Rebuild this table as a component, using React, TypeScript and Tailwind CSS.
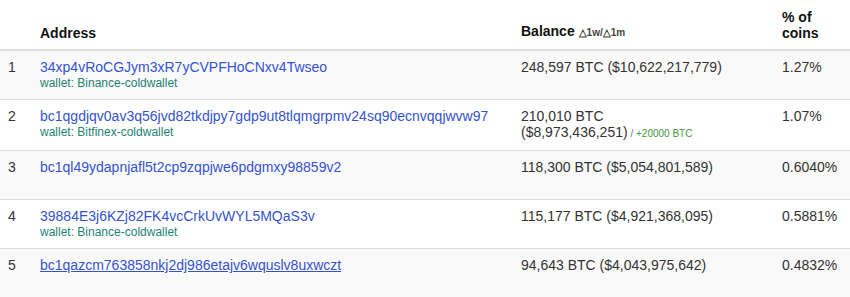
const rows = [
  {
    n: 1,
    addr: "34xp4vRoCGJym3xR7yCVPFHoCNxv4Twseo",
    wallet: "Binance-coldwallet",
    btc: "248,597 BTC",
    usd: "($10,622,217,779)",
    pct: "1.27%",
  },
  {
    n: 2,
    addr: "bc1qgdjqv0av3q56jvd82tkdjpy7gdp9ut8tlqmgrpmv24sq90ecnvqqjwvw97",
    wallet: "Bitfinex-coldwallet",
    btc: "210,010 BTC",
    usd: "($8,973,436,251)",
    delta: "+20000 BTC",
    pct: "1.07%",
  },
  {
    n: 3,
    addr: "bc1ql49ydapnjafl5t2cp9zqpjwe6pdgmxy98859v2",
    btc: "118,300 BTC",
    usd: "($5,054,801,589)",
    pct: "0.6040%",
  },
  {
    n: 4,
    addr: "39884E3j6KZj82FK4vcCrkUvWYL5MQaS3v",
    wallet: "Binance-coldwallet",
    btc: "115,177 BTC",
    usd: "($4,921,368,095)",
    pct: "0.5881%",
  },
  {
    n: 5,
    addr: "bc1qazcm763858nkj2dj986etajv6wquslv8uxwczt",
    btc: "94,643 BTC",
    usd: "($4,043,975,642)",
    pct: "0.4832%",
    hover: true,
  },
];

export default function App() {
  return (
    <div className="w-[850px] h-[297px] overflow-hidden bg-white font-['Liberation_Sans',Arial,sans-serif] text-[14px] leading-[16px] text-[#333]">
      <table className="w-[850px] table-fixed border-collapse">
        <colgroup>
          <col className="w-[32px]" />
          <col className="w-[481px]" />
          <col className="w-[261px]" />
          <col className="w-[76px]" />
        </colgroup>
        <thead>
          <tr className="h-[50px] border-b-2 border-[#dddddd] text-[#111] font-bold">
            <th className="p-2 align-bottom text-left"></th>
            <th className="p-2 align-bottom text-left">Address</th>
            <th className="p-2 align-bottom text-left">
              Balance{" "}
              <span className="text-[10px] text-[#444]">△1w/△1m</span>
            </th>
            <th className="p-2 align-bottom text-left">% of coins</th>
          </tr>
        </thead>
        <tbody>
          {rows.map((r) => (
            <tr
              key={r.n}
              className={`border-t border-[#dddddd] ${r.n % 2 === 1 ? "bg-[#f9f9f9]" : "bg-white"}`}
            >
              <td className="p-2 align-top">{r.n}</td>
              <td className="p-2 align-top">
                <a
                  href="#"
                  className={`text-[#3553cf] block ${r.hover ? "underline" : "no-underline"}`}
                >
                  {r.addr}
                </a>
                <div className="text-[12px] text-[#1d8373] h-[16px] leading-[17px]">
                  {r.wallet ? `wallet: ${r.wallet}` : "\u00a0"}
                </div>
              </td>
              <td className="p-2 align-top">
                {r.btc}{" "}
                <span className="whitespace-nowrap">
                  {r.usd}
                  {r.delta && (
                    <span className="text-[10px]">
                      {" "}
                      <span className="text-[#777]">/</span>{" "}
                      <span className="text-[#3e9a3e]">{r.delta}</span>
                    </span>
                  )}
                </span>
              </td>
              <td className="p-2 align-top">{r.pct}</td>
            </tr>
          ))}
        </tbody>
      </table>
    </div>
  );
}
